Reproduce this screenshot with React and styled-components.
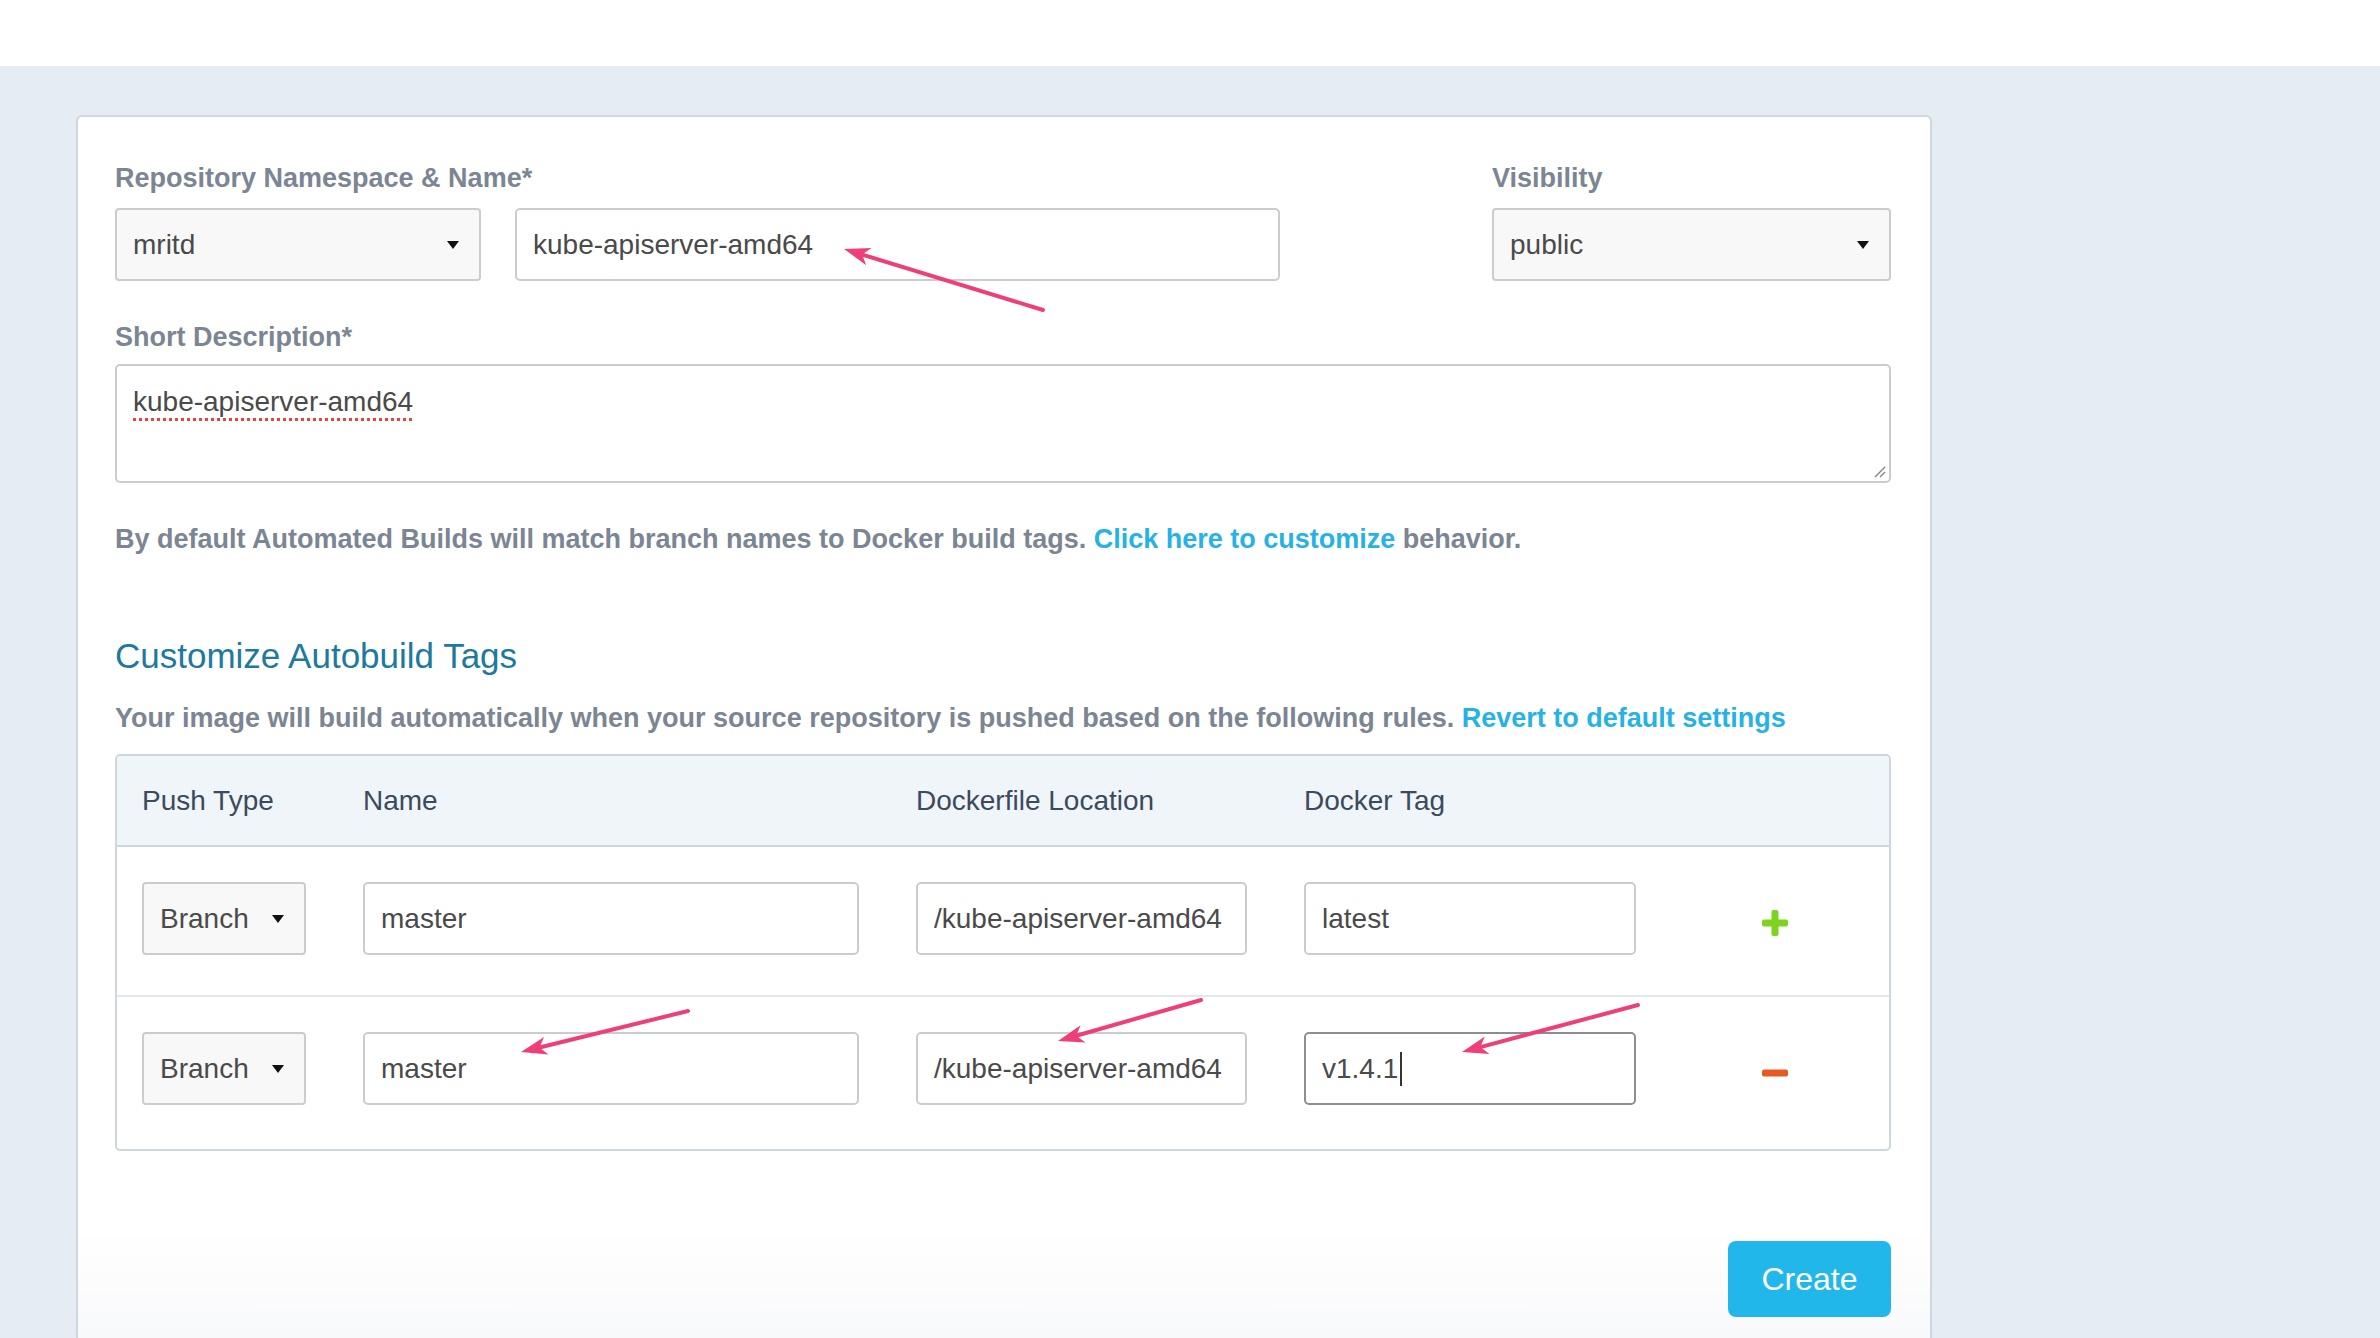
import styled, { createGlobalStyle } from "styled-components"

const GlobalStyle = createGlobalStyle`
    body {
        margin: 0;
        background-color: #e6ecf4;
        font-family: "Liberation Sans", Arial, sans-serif;
    }
    * {
        box-sizing: border-box;
    }
`

const arrows = [
    [1043, 310, 844, 249],
    [688, 1011, 521, 1052],
    [1201, 1000, 1058, 1041],
    [1638, 1005, 1462, 1052],
]

function Arrow({ from, to }) {
    const [x1, y1] = from
    const [x2, y2] = to
    const dx = x2 - x1
    const dy = y2 - y1
    const len = Math.hypot(dx, dy)
    const ux = dx / len
    const uy = dy / len
    const nx = -uy
    const ny = ux
    const bx = x2 - ux * 26
    const by = y2 - uy * 26
    const kx = x2 - ux * 19
    const ky = y2 - uy * 19
    const pts = [
        [x2, y2],
        [bx + nx * 9, by + ny * 9],
        [kx, ky],
        [bx - nx * 9, by - ny * 9],
    ].map((p) => p.join(",")).join(" ")
    return (
        <g>
            <line x1={x1} y1={y1} x2={kx} y2={ky} stroke="#ef3f78" strokeWidth="4" strokeLinecap="round" />
            <polygon points={pts} fill="#ef3f78" />
        </g>
    )
}

function Caret() {
    return (
        <svg width="12" height="8" viewBox="0 0 12 8">
            <path d="M0 0 L12 0 L6 8 Z" fill="#111" />
        </svg>
    )
}

export default function App() {
    const rows = [
        { name: "master", location: "/kube-apiserver-amd64", tag: "latest", add: true },
        { name: "master", location: "/kube-apiserver-amd64", tag: "v1.4.1", add: false },
    ]

    return (
        <Page>
            <GlobalStyle />
            <TopBar />
            <Main>
                <Card>
                    <TopRow>
                        <Group>
                            <Label>Repository Namespace &amp; Name*</Label>
                            <FieldRow>
                                <Select width="366px">
                                    <span>mritd</span>
                                    <Caret />
                                </Select>
                                <Input width="765px">kube-apiserver-amd64</Input>
                            </FieldRow>
                        </Group>
                        <Group>
                            <Label>Visibility</Label>
                            <Select width="399px">
                                <span>public</span>
                                <Caret />
                            </Select>
                        </Group>
                    </TopRow>

                    <Label tight>Short Description*</Label>
                    <TextBox>
                        <Misspelled>kube-apiserver-amd64</Misspelled>
                        <Grip width="14" height="14" viewBox="0 0 14 14">
                            <line x1="13" y1="3" x2="3" y2="13" stroke="#888" strokeWidth="1.5" />
                            <line x1="13" y1="8" x2="8" y2="13" stroke="#888" strokeWidth="1.5" />
                        </Grip>
                    </TextBox>

                    <Note>
                        By default Automated Builds will match branch names to Docker build tags. <LinkText>Click here to customize</LinkText> behavior.
                    </Note>

                    <Heading>Customize Autobuild Tags</Heading>
                    <SubNote>
                        Your image will build automatically when your source repository is pushed based on the following rules. <LinkText>Revert to default settings</LinkText>
                    </SubNote>

                    <Table>
                        <HeadRow>
                            <span>Push Type</span>
                            <span>Name</span>
                            <span>Dockerfile Location</span>
                            <span>Docker Tag</span>
                            <span />
                        </HeadRow>
                        {rows.map((row, i) => (
                            <BodyRow key={i} last={i === rows.length - 1}>
                                <Select>
                                    <span>Branch</span>
                                    <Caret />
                                </Select>
                                <Input>{row.name}</Input>
                                <Input>{row.location}</Input>
                                <Input focused={!row.add}>
                                    {row.tag}
                                    {!row.add && <TextCursor />}
                                </Input>
                                <IconCell>
                                    {row.add ? (
                                        <svg width="26" height="26" viewBox="0 0 26 26">
                                            <rect x="9.5" y="0" width="7" height="26" rx="2" fill="#7ed321" />
                                            <rect x="0" y="9.5" width="26" height="7" rx="2" fill="#7ed321" />
                                        </svg>
                                    ) : (
                                        <svg width="26" height="8" viewBox="0 0 26 8">
                                            <rect x="0" y="0.5" width="26" height="7" rx="2" fill="#e8591f" />
                                        </svg>
                                    )}
                                </IconCell>
                            </BodyRow>
                        ))}
                    </Table>

                    <Actions>
                        <CreateButton>Create</CreateButton>
                    </Actions>
                </Card>
            </Main>
            <Overlay width="2380" height="1338" viewBox="0 0 2380 1338">
                {arrows.map((a, i) => (
                    <Arrow key={i} from={[a[0], a[1]]} to={[a[2], a[3]]} />
                ))}
            </Overlay>
        </Page>
    )
}

const Page = styled.div`
    position: relative;
    width: 2380px;
    height: 1338px;
    overflow: hidden;
`

const TopBar = styled.div`
    height: 66px;
    background-color: #ffffff;
`

const Main = styled.div`
    padding: 49px 0 0 76px;
`

const Card = styled.div`
    width: 1856px;
    background: linear-gradient(#ffffff 88%, #f6f7f9 100%);
    border: 2px solid #cfd6df;
    border-radius: 6px;
    padding: 45px 39px 60px 37px;
`

const TopRow = styled.div`
    display: flex;
    justify-content: space-between;
    margin-bottom: 40px;
`

const Group = styled.div`
    display: flex;
    flex-direction: column;
`

const FieldRow = styled.div`
    display: flex;
    gap: 34px;
`

const Label = styled.div`
    font-size: 27px;
    line-height: 32px;
    font-weight: 700;
    color: #7b8593;
    margin-bottom: ${(p) => (p.tight ? "11px" : "14px")};
`

const Select = styled.div`
    width: ${(p) => p.width || "164px"};
    height: 73px;
    display: flex;
    align-items: center;
    justify-content: space-between;
    padding: 0 20px 0 16px;
    background-color: #f8f8f8;
    border: 2px solid #cccccc;
    border-radius: 4px;
    font-size: 28px;
    color: #4a4a4a;
`

const Input = styled.div`
    width: ${(p) => p.width || "auto"};
    height: 73px;
    display: flex;
    align-items: center;
    padding: 0 16px;
    background-color: #ffffff;
    border: 2px solid ${(p) => (p.focused ? "#8e8e8e" : "#cccccc")};
    border-radius: 5px;
    font-size: 28px;
    color: #4a4a4a;
    white-space: nowrap;
`

const TextCursor = styled.span`
    display: inline-block;
    width: 2px;
    height: 34px;
    margin-left: 2px;
    background-color: #333333;
`

const TextBox = styled.div`
    position: relative;
    height: 119px;
    padding: 20px 16px;
    border: 2px solid #cccccc;
    border-radius: 5px;
    font-size: 28px;
    line-height: 32px;
    color: #4a4a4a;
    margin-bottom: 40px;
`

const Misspelled = styled.span`
    text-decoration: underline dotted #e5443b;
    text-decoration-thickness: 3px;
    text-underline-offset: 7px;
`

const Grip = styled.svg`
    position: absolute;
    right: 3px;
    bottom: 3px;
`

const Note = styled.p`
    margin: 0 0 80px 0;
    font-size: 27px;
    line-height: 32px;
    font-weight: 700;
    color: #7b8593;
`

const LinkText = styled.span`
    color: #27b2e6;
    cursor: pointer;
`

const Heading = styled.h2`
    margin: 0 0 25px 0;
    font-size: 35px;
    line-height: 42px;
    font-weight: 400;
    color: #1d7a9e;
`

const SubNote = styled.p`
    margin: 0 0 20px 0;
    font-size: 27px;
    line-height: 32px;
    font-weight: 700;
    color: #7b8593;
`

const Table = styled.div`
    border: 2px solid #cfd6df;
    border-radius: 5px;
    overflow: hidden;
`

const HeadRow = styled.div`
    display: grid;
    grid-template-columns: 164px 496px 331px 332px 164px;
    column-gap: 57px;
    align-items: center;
    height: 91px;
    padding: 0 24px 0 25px;
    background-color: #f0f5fa;
    border-bottom: 2px solid #cdd5df;
    font-size: 28px;
    color: #3c4a5c;
`

const BodyRow = styled.div`
    display: grid;
    grid-template-columns: 164px 496px 331px 332px 164px;
    column-gap: 57px;
    align-items: center;
    padding: 35px 24px ${(p) => (p.last ? "44px" : "40px")} 25px;
    border-bottom: ${(p) => (p.last ? "none" : "2px solid #e4e8ed")};
`

const IconCell = styled.div`
    display: flex;
    justify-content: center;
    align-items: center;
    padding-top: 9px;
`

const Actions = styled.div`
    display: flex;
    justify-content: flex-end;
    margin-top: 90px;
`

const CreateButton = styled.button`
    width: 163px;
    height: 76px;
    border: 0 none;
    border-radius: 8px;
    background-color: #22b7ea;
    color: #ffffff;
    font-family: "Liberation Sans", Arial, sans-serif;
    font-size: 32px;
    cursor: pointer;
`

const Overlay = styled.svg`
    position: absolute;
    top: 0;
    left: 0;
    pointer-events: none;
`
